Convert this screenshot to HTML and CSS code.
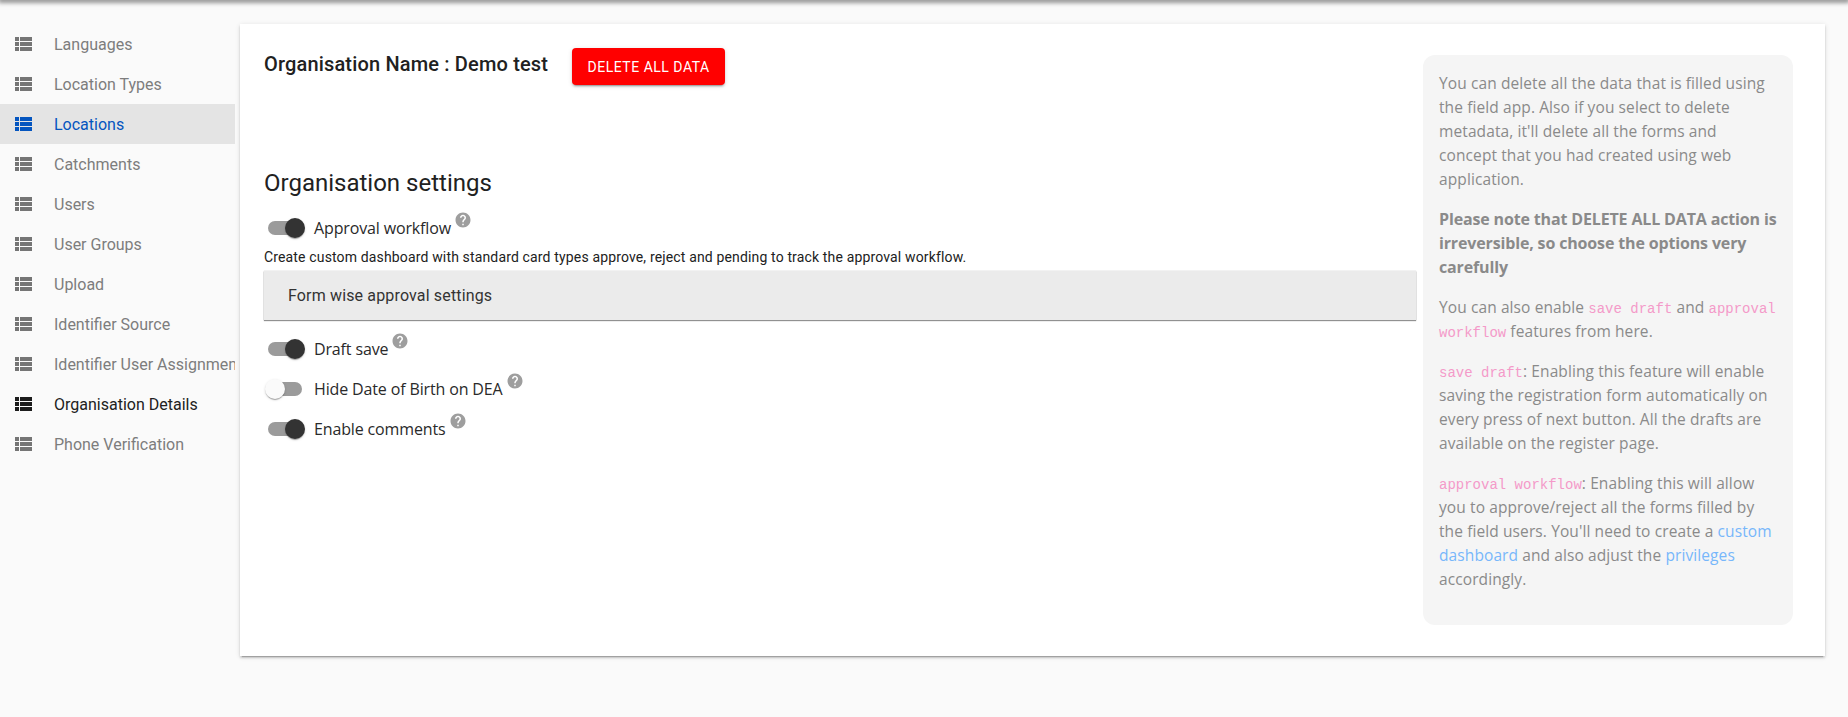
FILE: index.html
```html
<!DOCTYPE html>
<html lang="en">
<head>
<meta charset="utf-8">
<title>Organisation Details</title>
<link rel="stylesheet" href="styles.css">
</head>
<body>
<svg class="sprite" width="0" height="0" aria-hidden="true">
  <symbol id="list" viewBox="0 0 24 24"><path d="M4 14h4v-4H4v4zm0 5h4v-4H4v4zM4 9h4V5H4v4zm5 5h12v-4H9v4zm0 5h12v-4H9v4zM9 5v4h12V5H9z"/></symbol>
  <symbol id="help" viewBox="0 0 24 24"><path d="M12 2C6.48 2 2 6.48 2 12s4.48 10 10 10 10-4.48 10-10S17.52 2 12 2zm1 17h-2v-2h2v2zm2.07-7.75l-.9.92C13.45 12.9 13 13.5 13 15h-2v-.5c0-1.1.45-2.1 1.17-2.83l1.24-1.26c.37-.36.59-.86.59-1.41 0-1.1-.9-2-2-2s-2 .9-2 2H8c0-2.21 1.79-4 4-4s4 1.79 4 4c0 .88-.36 1.68-.93 2.25z"/></symbol>
</svg>
<header class="topbar"></header>
<div class="layout">
  <nav class="sidebar">
    <a class="nav-item"><svg class="nav-icon"><use href="#list"/></svg><span class="nav-text">Languages</span></a>
    <a class="nav-item"><svg class="nav-icon"><use href="#list"/></svg><span class="nav-text">Location Types</span></a>
    <a class="nav-item nav-active"><svg class="nav-icon"><use href="#list"/></svg><span class="nav-text">Locations</span></a>
    <a class="nav-item"><svg class="nav-icon"><use href="#list"/></svg><span class="nav-text">Catchments</span></a>
    <a class="nav-item"><svg class="nav-icon"><use href="#list"/></svg><span class="nav-text">Users</span></a>
    <a class="nav-item"><svg class="nav-icon"><use href="#list"/></svg><span class="nav-text">User Groups</span></a>
    <a class="nav-item"><svg class="nav-icon"><use href="#list"/></svg><span class="nav-text">Upload</span></a>
    <a class="nav-item"><svg class="nav-icon"><use href="#list"/></svg><span class="nav-text">Identifier Source</span></a>
    <a class="nav-item"><svg class="nav-icon"><use href="#list"/></svg><span class="nav-text">Identifier User Assignment</span></a>
    <a class="nav-item nav-current"><svg class="nav-icon"><use href="#list"/></svg><span class="nav-text">Organisation Details</span></a>
    <a class="nav-item"><svg class="nav-icon"><use href="#list"/></svg><span class="nav-text">Phone Verification</span></a>
  </nav>
  <main class="card">
    <section class="content">
      <div class="title-row">
        <h1 class="org-name">Organisation Name : Demo test</h1>
        <button class="danger-btn">DELETE ALL DATA</button>
      </div>
      <h2 class="settings-title">Organisation settings</h2>
      <div class="setting">
        <span class="switch switch-on"><span class="thumb"></span></span>
        <span class="setting-label">Approval workflow</span>
        <svg class="help-icon"><use href="#help"/></svg>
      </div>
      <p class="setting-desc">Create custom dashboard with standard card types approve, reject and pending to track the approval workflow.</p>
      <div class="accordion">Form wise approval settings</div>
      <div class="setting setting-spaced">
        <span class="switch switch-on"><span class="thumb"></span></span>
        <span class="setting-label">Draft save</span>
        <svg class="help-icon"><use href="#help"/></svg>
      </div>
      <div class="setting">
        <span class="switch"><span class="thumb"></span></span>
        <span class="setting-label">Hide Date of Birth on DEA</span>
        <svg class="help-icon"><use href="#help"/></svg>
      </div>
      <div class="setting">
        <span class="switch switch-on"><span class="thumb"></span></span>
        <span class="setting-label">Enable comments</span>
        <svg class="help-icon"><use href="#help"/></svg>
      </div>
    </section>
    <aside class="help-box">
      <p>You can delete all the data that is filled using the field app. Also if you select to delete metadata, it'll delete all the forms and concept that you had created using web application.</p>
      <p><strong>Please note that DELETE ALL DATA action is irreversible, so choose the options very carefully</strong></p>
      <p>You can also enable <code>save draft</code> and <code>approval workflow</code> features from here.</p>
      <p><code>save draft</code>: Enabling this feature will enable saving the registration form automatically on every press of next button. All the drafts are available on the register page.</p>
      <p><code>approval workflow</code>: Enabling this will allow you to approve/reject all the forms filled by the field users. You'll need to create a <a class="help-link">custom dashboard</a> and also adjust the <a class="help-link">privileges</a> accordingly.</p>
    </aside>
  </main>
</div>
</body>
</html>
```
FILE: styles.css
```css
* { box-sizing: border-box; }
html, body { margin: 0; height: 100%; overflow: hidden; }
body { background: #fafafa; font-family: Roboto, sans-serif; color: rgba(0,0,0,.87); }
.sprite { position: absolute; }

.topbar { height: 0; box-shadow: 0 0 5px 2px rgba(0,0,0,.6); }

.layout { display: flex; align-items: flex-start; padding-top: 24px; }

.sidebar { width: 235px; margin-right: 5px; flex: none; overflow: hidden; }
.nav-item { display: flex; align-items: center; height: 40px; padding-left: 11px; color: rgba(0,0,0,.54); white-space: nowrap; }
.nav-icon { width: 24px; height: 24px; flex: none; margin-right: 19px; fill: currentColor; color: #757575; }
.nav-text { font-size: 16px; color: #7d7d7d; }
.nav-active { background: #e4e4e4; }
.nav-active .nav-icon, .nav-active .nav-text { color: #0455bf; }
.nav-current .nav-icon { color: #1c1c1c; }
.nav-current .nav-text { color: #212121; }

.card { width: 1585px; height: 632px; background: #fff; display: flex; padding: 24px 32px 31px 24px; box-shadow: 0 3px 1px -2px rgba(0,0,0,.2), 0 2px 2px rgba(0,0,0,.14), 0 1px 5px rgba(0,0,0,.12); }

.content { flex: 1; min-width: 0; margin-right: 7px; }
.title-row { display: flex; align-items: flex-start; height: 37px; }
.org-name { margin: 0; font-size: 20px; line-height: 33px; font-weight: 500; letter-spacing: .16px; color: #212121; }
.danger-btn { margin-left: 24px; height: 37px; width: 153px; border: 0; border-radius: 4px; background: #f00; color: #fff; font: 400 14px Roboto, sans-serif; letter-spacing: .5px; box-shadow: 0 3px 1px -2px rgba(0,0,0,.2), 0 2px 2px rgba(0,0,0,.14), 0 1px 5px rgba(0,0,0,.12); padding: 0; }
.settings-title { margin: 82px 0 9px; font-size: 24px; line-height: 32px; font-weight: 400; color: #212121; }

.setting { display: flex; align-items: center; height: 40px; padding-left: 2px; }
.setting-spaced { margin-top: 9px; }
.switch { position: relative; width: 34px; height: 14px; margin: 0 12px 0 2px; border-radius: 7px; background: #9b9b9b; flex: none; }
.thumb { position: absolute; top: -3px; left: -3px; width: 20px; height: 20px; border-radius: 50%; background: #fafafa; box-shadow: 0 2px 1px -1px rgba(0,0,0,.2), 0 1px 1px rgba(0,0,0,.14), 0 1px 3px rgba(0,0,0,.12); }
.switch-on .thumb { left: auto; right: -3px; background: #333; }
.setting-label { font-family: "Open Sans", sans-serif; font-size: 16px; letter-spacing: -.14px; color: #2a2a2a; }
.help-icon { width: 18px; height: 18px; margin: -16px 0 0 3px; fill: #9e9e9e; flex: none; }
.setting-desc { margin: 0; font-size: 14px; line-height: 18px; letter-spacing: .15px; color: #212121; }
.accordion { height: 49px; margin-top: 5px; display: flex; align-items: center; padding-left: 24px; background: #ebebeb; font-size: 16px; letter-spacing: .15px; color: #333; box-shadow: 0 1px 1px rgba(0,0,0,.4), 0 0 1px rgba(0,0,0,.3); }

.help-box { width: 370px; flex: none; margin-top: 7px; height: 570px; padding: 16px; border-radius: 12px; background: #f5f5f5; font-family: "Open Sans", sans-serif; font-size: 15.5px; letter-spacing: .1px; line-height: 24px; color: #8a8a8a; }
.help-box p { margin: 0 0 16px; }
.help-box strong { font-size: 16px; font-weight: 700; letter-spacing: -.15px; }
.help-box code { font-family: "Liberation Mono", monospace; font-size: 14px; line-height: 20px; letter-spacing: 0; color: #f49ac9; }
.help-link { color: #77b7fb; }
```
